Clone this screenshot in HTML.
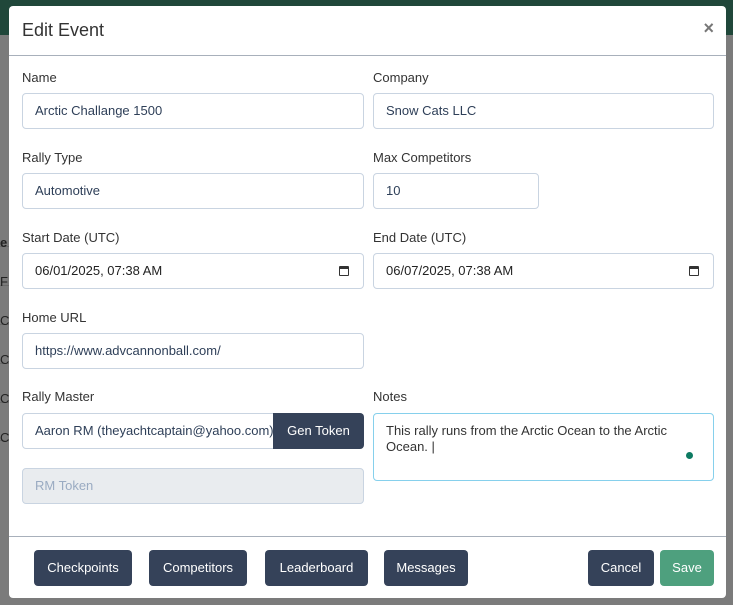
<!DOCTYPE html>
<html><head><meta charset="utf-8"><style>
*{box-sizing:border-box;margin:0;padding:0}
body{width:733px;height:605px;overflow:hidden;background:#7b7b7b;font-family:"Liberation Sans",sans-serif;position:relative}
.top{position:absolute;left:0;top:0;width:733px;height:35px;background:#20473a}
.bgtxt{position:absolute;font-size:13px;color:#222;left:0}
.line{position:absolute;left:0;width:10px;height:1px;background:#6a6a6a}
.modal{position:absolute;left:9px;top:6px;width:717px;height:592px;background:#fff;border-radius:4px}
.hdr{position:absolute;left:0;top:0;width:100%;height:50px;border-bottom:1px solid #a8b0bb}
.hdr h1{position:absolute;left:13px;top:14px;font-size:18px;font-weight:normal;color:#333}
.x{position:absolute;right:12px;top:12px;font-size:18px;font-weight:bold;color:#777}
.lbl{position:absolute;font-size:13px;color:#333}
.in{position:absolute;height:36px;border:1px solid #c9d4e1;border-radius:4px;font-size:13px;color:#2e3f58;padding:0 12px;line-height:34px;white-space:nowrap;overflow:hidden}
.btn{position:absolute;top:544px;height:36px;background:#354259;color:#fff;border-radius:4px;font-size:13px;line-height:36px;text-align:center}
.cal{position:absolute;right:14px;top:12px;width:10px;height:10px;border:1.5px solid #333;border-top-width:3px;border-radius:1px}
.ftr{position:absolute;left:0;top:530px;width:100%;height:1px;background:#a8b0bb}
</style></head><body>
<div class="top"></div>
<div class="line" style="top:246px"></div><div class="line" style="top:285px"></div><div class="line" style="top:324px"></div><div class="line" style="top:363px"></div><div class="line" style="top:402px"></div><div class="line" style="top:440px"></div>
<div class="bgtxt" style="top:235px;font-weight:bold">e</div>
<div class="bgtxt" style="top:274px">F</div>
<div class="bgtxt" style="top:313px">C</div>
<div class="bgtxt" style="top:352px">C</div>
<div class="bgtxt" style="top:391px">C</div>
<div class="bgtxt" style="top:430px">C</div>
<div class="modal">
<div class="hdr"><h1>Edit Event</h1><div class="x">×</div></div>
<div class="lbl" style="left:13px;top:64px">Name</div>
<div class="lbl" style="left:364px;top:64px">Company</div>
<div class="in" style="left:13px;top:87px;width:342px">Arctic Challange 1500</div>
<div class="in" style="left:364px;top:87px;width:341px">Snow Cats LLC</div>
<div class="lbl" style="left:13px;top:144px">Rally Type</div>
<div class="lbl" style="left:364px;top:144px">Max Competitors</div>
<div class="in" style="left:13px;top:167px;width:342px">Automotive</div>
<div class="in" style="left:364px;top:167px;width:166px">10</div>
<div class="lbl" style="left:13px;top:224px">Start Date (UTC)</div>
<div class="lbl" style="left:364px;top:224px">End Date (UTC)</div>
<div class="in" style="left:13px;top:247px;width:342px;color:#222">06/01/2025, 07:38 AM<span class="cal"></span></div>
<div class="in" style="left:364px;top:247px;width:341px;color:#222">06/07/2025, 07:38 AM<span class="cal"></span></div>
<div class="lbl" style="left:13px;top:304px">Home URL</div>
<div class="in" style="left:13px;top:327px;width:342px">https://www.advcannonball.com/</div>
<div class="lbl" style="left:13px;top:383px">Rally Master</div>
<div class="lbl" style="left:364px;top:383px">Notes</div>
<div class="in" style="left:13px;top:407px;width:254px;border-radius:4px 0 0 4px;padding-right:0;text-overflow:clip">Aaron RM (theyachtcaptain@yahoo.com)</div>
<div style="position:absolute;left:264px;top:407px;width:91px;height:36px;background:#354259;color:#fff;border-radius:0 4px 4px 0;font-size:13px;line-height:36px;text-align:center">Gen Token</div>
<div class="in" style="left:13px;top:462px;width:342px;background:#e9ecef;color:#9aabc2">RM Token</div>
<div class="in" style="left:364px;top:407px;width:341px;height:68px;border-color:#86d0ec;white-space:normal;line-height:16px;padding-top:9px;color:#333">This rally runs from the Arctic Ocean to the Arctic Ocean. |<span style="position:absolute;right:20px;top:38px;width:7px;height:7px;border-radius:50%;background:#0d7a62"></span></div>
<div class="ftr"></div>
<div class="btn" style="left:25px;width:98px">Checkpoints</div>
<div class="btn" style="left:140px;width:98px">Competitors</div>
<div class="btn" style="left:256px;width:103px">Leaderboard</div>
<div class="btn" style="left:375px;width:84px">Messages</div>
<div class="btn" style="left:579px;width:66px">Cancel</div>
<div class="btn" style="left:651px;width:54px;background:#4ea07e">Save</div>
</div>
</body></html>
